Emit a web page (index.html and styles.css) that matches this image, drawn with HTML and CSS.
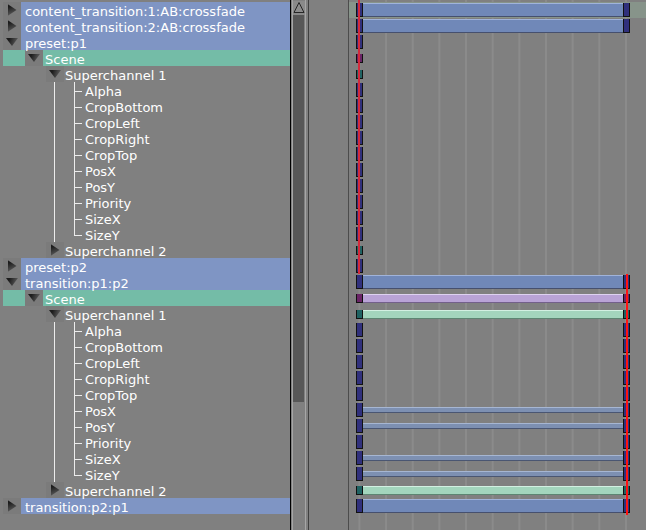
FILE: index.html
```html
<!DOCTYPE html>
<html lang="en">
<head>
  <meta charset="UTF-8">
  <title>Sequence timeline</title>
  <link rel="stylesheet" href="styles.css">
</head>
<body>
<div class="app">
  <!-- tree of channels -->
  <div class="tree">
    <div class="row sel d0"><span class="exp"><i class="tri-r"></i></span><span class="label">content_transition:1:AB:crossfade</span></div>
    <div class="row sel d0"><span class="exp"><i class="tri-r"></i></span><span class="label">content_transition:2:AB:crossfade</span></div>
    <div class="row sel d0"><span class="exp"><i class="tri-d"></i></span><span class="label">preset:p1</span></div>
    <div class="row scene d1"><span class="exp"><i class="tri-d"></i></span><span class="label">Scene</span></div>
    <div class="row d2"><span class="exp"><i class="tri-d"></i></span><span class="label">Superchannel 1</span></div>
    <div class="kids">
      <div class="leaf"><span class="twig"></span><span class="label">Alpha</span></div>
      <div class="leaf"><span class="twig"></span><span class="label">CropBottom</span></div>
      <div class="leaf"><span class="twig"></span><span class="label">CropLeft</span></div>
      <div class="leaf"><span class="twig"></span><span class="label">CropRight</span></div>
      <div class="leaf"><span class="twig"></span><span class="label">CropTop</span></div>
      <div class="leaf"><span class="twig"></span><span class="label">PosX</span></div>
      <div class="leaf"><span class="twig"></span><span class="label">PosY</span></div>
      <div class="leaf"><span class="twig"></span><span class="label">Priority</span></div>
      <div class="leaf"><span class="twig"></span><span class="label">SizeX</span></div>
      <div class="leaf last"><span class="twig"></span><span class="label">SizeY</span></div>
    </div>
    <div class="row d2"><span class="exp"><i class="tri-r"></i></span><span class="label">Superchannel 2</span></div>
    <div class="row sel d0"><span class="exp"><i class="tri-r"></i></span><span class="label">preset:p2</span></div>
    <div class="row sel d0"><span class="exp"><i class="tri-d"></i></span><span class="label">transition:p1:p2</span></div>
    <div class="row scene d1"><span class="exp"><i class="tri-d"></i></span><span class="label">Scene</span></div>
    <div class="row d2"><span class="exp"><i class="tri-d"></i></span><span class="label">Superchannel 1</span></div>
    <div class="kids">
      <div class="leaf"><span class="twig"></span><span class="label">Alpha</span></div>
      <div class="leaf"><span class="twig"></span><span class="label">CropBottom</span></div>
      <div class="leaf"><span class="twig"></span><span class="label">CropLeft</span></div>
      <div class="leaf"><span class="twig"></span><span class="label">CropRight</span></div>
      <div class="leaf"><span class="twig"></span><span class="label">CropTop</span></div>
      <div class="leaf"><span class="twig"></span><span class="label">PosX</span></div>
      <div class="leaf"><span class="twig"></span><span class="label">PosY</span></div>
      <div class="leaf"><span class="twig"></span><span class="label">Priority</span></div>
      <div class="leaf"><span class="twig"></span><span class="label">SizeX</span></div>
      <div class="leaf last"><span class="twig"></span><span class="label">SizeY</span></div>
    </div>
    <div class="row d2"><span class="exp"><i class="tri-r"></i></span><span class="label">Superchannel 2</span></div>
    <div class="row sel d0"><span class="exp"><i class="tri-r"></i></span><span class="label">transition:p2:p1</span></div>
  </div>

  <!-- scrollbar -->
  <div class="vscroll">
    <div class="trough">
      <div class="up">
        <svg width="12" height="13" viewBox="0 0 12 13"><polygon points="6,1.5 11,11.5 1,11.5" fill="#8c8c8c" stroke="#262626" stroke-width="1"/></svg>
      </div>
      <div class="thumb"></div>
    </div>
  </div>

  <!-- timeline -->
  <div class="timeline">
    <div class="gutter"></div>
    <div class="tracks">
      <div class="track hl"><i class="key"></i><i class="bar"></i><i class="key"></i></div>
      <div class="track"><i class="key"></i><i class="bar"></i><i class="key"></i></div>
      <div class="track"><i class="key"></i></div>
      <div class="track"><i class="key small purple"></i></div>
      <div class="track"><i class="key small teal"></i></div>
      <div class="track"><i class="key"></i></div>
      <div class="track"><i class="key"></i></div>
      <div class="track"><i class="key"></i></div>
      <div class="track"><i class="key"></i></div>
      <div class="track"><i class="key"></i></div>
      <div class="track"><i class="key"></i></div>
      <div class="track"><i class="key"></i></div>
      <div class="track"><i class="key"></i></div>
      <div class="track"><i class="key"></i></div>
      <div class="track"><i class="key"></i></div>
      <div class="track"><i class="key small teal"></i></div>
      <div class="track"><i class="key"></i></div>
      <div class="track"><i class="key"></i><i class="bar"></i><i class="key"></i></div>
      <div class="track"><i class="key small purple"></i><i class="bar lav"></i><i class="key small purple"></i></div>
      <div class="track"><i class="key small teal"></i><i class="bar mint"></i><i class="key small teal"></i></div>
      <div class="track"><i class="key"></i><i class="gap"></i><i class="key"></i></div>
      <div class="track"><i class="key"></i><i class="gap"></i><i class="key"></i></div>
      <div class="track"><i class="key"></i><i class="gap"></i><i class="key"></i></div>
      <div class="track"><i class="key"></i><i class="gap"></i><i class="key"></i></div>
      <div class="track"><i class="key"></i><i class="gap"></i><i class="key"></i></div>
      <div class="track"><i class="key"></i><i class="bar thin"></i><i class="key"></i></div>
      <div class="track"><i class="key"></i><i class="bar thin"></i><i class="key"></i></div>
      <div class="track"><i class="key"></i><i class="gap"></i><i class="key"></i></div>
      <div class="track"><i class="key"></i><i class="bar thin"></i><i class="key"></i></div>
      <div class="track"><i class="key"></i><i class="bar thin"></i><i class="key"></i></div>
      <div class="track"><i class="key small teal"></i><i class="bar mint"></i><i class="key small teal"></i></div>
      <div class="track"><i class="key"></i><i class="bar"></i><i class="key"></i></div>

      <div class="playhead ph-top"></div>
      <div class="playhead ph-bottom"></div>
    </div>
  </div>
</div>
</body>
</html>
```

FILE: styles.css
```css
* {
  box-sizing: border-box;
}
body {
  margin: 0;
  background: #808080;
  color: #fff;
  font-family: "DejaVu Sans", Verdana, sans-serif;
  font-size: 13px;
  overflow: hidden;
}
.app {
  display: flex;
  height: 530px;
}

/* ---- tree ---- */
.tree {
  width: 291px;
  flex: none;
  border-right: 1px solid #000;
  padding: 2px 0 0 3px;
}
.row,
.leaf {
  display: flex;
  align-items: center;
  height: 16px;
  line-height: 16px;
  white-space: nowrap;
}
.label {
  position: relative;
  top: 2px;
}
.sel {
  background: #7f95c4;
}
.scene {
  background: #74bca7;
}
.exp {
  flex: none;
  width: 18px;
  height: 16px;
  display: flex;
  align-items: center;
  justify-content: center;
  background: #7b7b7b;
}
.tri-r {
  display: block;
  width: 9px;
  height: 12px;
  clip-path: polygon(0 0, 100% 50%, 0 100%);
  background: linear-gradient(160deg, #1c1c1c 20%, #6c6c6c 100%);
}
.tri-d {
  display: block;
  width: 12px;
  height: 8px;
  clip-path: polygon(0 0, 100% 0, 50% 100%);
  background: linear-gradient(110deg, #1c1c1c 25%, #6c6c6c 100%);
}
.d0 .label { margin-left: 4px; }
.d1 .exp { margin-left: 22px; }
.d1 .label { margin-left: 2px; }
.d2 .exp { margin-left: 43px; }
.d2 .label { margin-left: 1px; }

.kids {
  margin-left: 51px;
  border-left: 1px solid #ececec;
}
.twig {
  position: relative;
  flex: none;
  width: 8px;
  height: 16px;
  margin-left: 19px;
}
.twig::before {
  content: "";
  position: absolute;
  left: 0;
  top: 0;
  width: 1px;
  height: 16px;
  background: #ececec;
}
.twig::after {
  content: "";
  position: absolute;
  left: 0;
  top: 9px;
  width: 8px;
  height: 1px;
  background: #ececec;
}
.last .twig::before {
  height: 10px;
}
.leaf .label {
  margin-left: 3px;
}

/* ---- scrollbar ---- */
.vscroll {
  width: 18px;
  flex: none;
  padding: 0 2px 0 1px;
  border-right: 1px solid #404040;
}
.trough {
  height: 100%;
  border-left: 1px solid #a6a6a6;
  border-right: 1px solid #a6a6a6;
  padding-top: 1px;
}
.up {
  height: 14px;
  background: #8a8a8a;
}
.up svg {
  display: block;
}
.thumb {
  height: 387px;
  margin-right: 1px;
  background: #575757;
}

/* ---- timeline ---- */
.timeline {
  flex: 1;
  display: flex;
}
.gutter {
  width: 40px;
  flex: none;
  border-right: 1px solid #4c4c4c;
}
.tracks {
  position: relative;
  flex: 1;
  padding-top: 2px;
  background-image: linear-gradient(to right, transparent 25px, #8b8b8b 25px, #8b8b8b 26.5px, transparent 26.5px);
  background-size: 26.667px 100%;
  background-position: -15.27px 0;
}
.track {
  display: flex;
  align-items: center;
  height: 16px;
  padding: 0 16px 0 7px;
}
.track.hl {
  background: #87948a;
}
.key {
  flex: none;
  width: 7px;
  height: 14px;
  background: #30307c;
  border-left: 1px solid #111;
  border-right: 1px solid #111;
  border-bottom: 1px solid #111;
}
.key.small {
  height: 9px;
}
.key.purple {
  background: #6a2466;
}
.key.teal {
  background: #1f6262;
}
.gap {
  flex: 1;
}
.bar {
  flex: 1;
  height: 14px;
  background: #7088b8;
  border-top: 1px solid #a0b3da;
  border-bottom: 1px solid #46506e;
}
.bar.lav {
  height: 9px;
  background: #b9a3d6;
  border-top-color: #ded2f0;
  border-bottom-color: #73608a;
}
.bar.mint {
  height: 9px;
  background: #a3d5bd;
  border-top-color: #d2f0e2;
  border-bottom-color: #5d8572;
}
.bar.thin {
  height: 6px;
  background: #7d90b2;
  border-top-color: #a6b6d2;
  border-bottom-color: #4a5672;
}
.playhead {
  position: absolute;
  width: 2px;
}
.ph-top {
  left: 9px;
  top: 0;
  height: 274px;
  background: #d42a3c;
}
.ph-bottom {
  left: 277px;
  top: 274px;
  height: 241px;
  background: #ff1212;
}
```
